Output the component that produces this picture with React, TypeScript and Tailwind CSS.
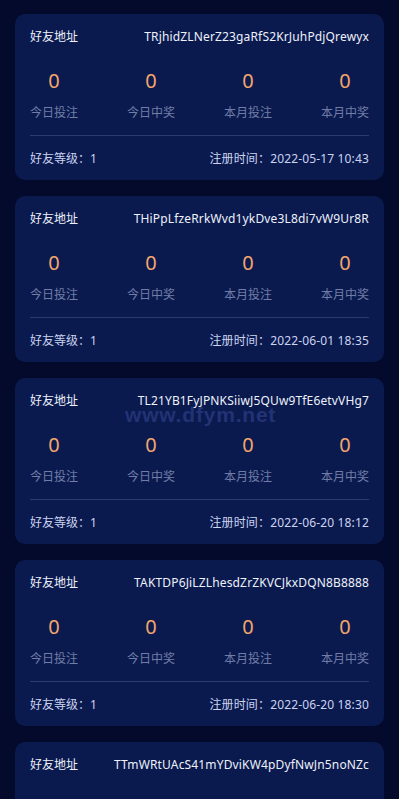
import React from "react";

const rows = [
  { addr: "TRjhidZLNerZ23gaRfS2KrJuhPdjQrewyx", time: "2022-05-17 10:43" },
  { addr: "THiPpLfzeRrkWvd1ykDve3L8di7vW9Ur8R", time: "2022-06-01 18:35" },
  { addr: "TL21YB1FyJPNKSiiwJ5QUw9TfE6etvVHg7", time: "2022-06-20 18:12" },
  { addr: "TAKTDP6JiLZLhesdZrZKVCJkxDQN8B8888", time: "2022-06-20 18:30" },
  { addr: "TTmWRtUAcS41mYDviKW4pDyfNwJn5noNZc", time: "2022-06-20 18:30" },
];

const labels = ["今日投注", "今日中奖", "本月投注", "本月中奖"];

export default function App() {
  return (
    <div
      className="relative h-[799px] w-full overflow-hidden bg-[#030a2c] px-[15px] pt-[14px]"
      style={{ fontFamily: '"Noto Sans", "Noto Sans CJK SC", sans-serif' }}
    >
      <div className="flex flex-col gap-[16px]">
        {rows.map((r, i) => (
          <div key={i} className="rounded-[10px] bg-[#0a1a4f] px-[15px] pt-[15px] pb-[13px]">
            <div className="flex h-[16px] items-center justify-between text-[12px] leading-[16px] text-[#eef1fa]">
              <span>好友地址</span>
              <span className="tracking-[0.15px]">{r.addr}</span>
            </div>
            <div className="mt-[24px] flex justify-between">
              {labels.map((l) => (
                <div key={l} className="flex w-[48px] flex-col items-center">
                  <div className="h-[24px] text-[20px] leading-[24px] text-[#f4a56b]">0</div>
                  <div className="mt-[12px] h-[16px] text-[12px] leading-[16px] text-[#717da6]">{l}</div>
                </div>
              ))}
            </div>
            <div className="mt-[14px] h-px bg-[#2c3a6c]" />
            <div className="mt-[15px] flex h-[16px] items-center justify-between text-[12px] leading-[16px] text-[#cbd3ef]">
              <span>好友等级：1</span>
              <span className="tracking-[0.15px]">注册时间：{r.time}</span>
            </div>
          </div>
        ))}
      </div>
      <div
        className="pointer-events-none absolute left-[125px] top-[403px] text-[21px] font-bold leading-[24px] tracking-[0.8px] text-[#34438f]/60"
        style={{ fontFamily: '"Liberation Sans", Arial, sans-serif' }}
      >
        www.dfym.net
      </div>
    </div>
  );
}
